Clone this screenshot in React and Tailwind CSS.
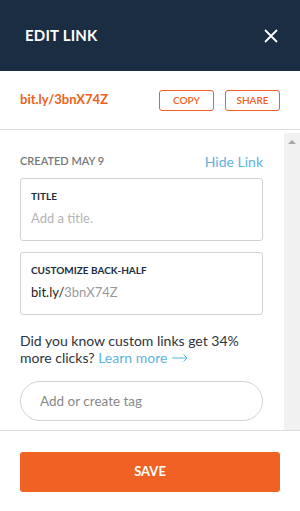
import React from "react";

export default function App() {
  return (
    <div className="w-[300px] h-[511px] bg-white flex flex-col overflow-hidden" style={{ fontFamily: "Lato, 'Open Sans', sans-serif" }}>
      {/* Header */}
      <div className="h-[71px] bg-[#1b2d42] flex items-center justify-between pl-[25px] pr-[21px] shrink-0">
        <h1 className="text-white font-bold text-[15px] tracking-[0.2px]">EDIT LINK</h1>
        <svg width="16" height="16" viewBox="0 0 16 16" className="text-white">
          <path d="M2 2 L14 14 M14 2 L2 14" stroke="currentColor" strokeWidth="1.8" />
        </svg>
      </div>

      {/* Link row */}
      <div className="h-[59px] flex items-center justify-between pl-[20px] pr-[20px] border-b border-[#dcdcdc] shrink-0">
        <span className="text-[#ee6123] font-bold text-[13px]">bit.ly/3bnX74Z</span>
        <div className="flex gap-[11px]">
          <button className="w-[55px] h-[21px] border border-[#ee6123] rounded-[3px] text-[#ee6123] text-[10px] font-semibold">COPY</button>
          <button className="w-[55px] h-[21px] border border-[#ee6123] rounded-[3px] text-[#ee6123] text-[10px] font-semibold">SHARE</button>
        </div>
      </div>

      {/* Scroll area */}
      <div className="flex h-[301px] border-b border-[#dcdcdc] shrink-0">
        <div className="flex-1 pl-[20px] pr-[21px] pt-[21px]">
          <div className="flex items-center justify-between">
            <span className="text-[#777] text-[11px] font-semibold">CREATED MAY 9</span>
            <span className="text-[#5eb2e0] text-[14px]">Hide Link</span>
          </div>
          <div className="mt-[6px] h-[63px] border border-[#d2d2d2] rounded-[3px] px-[10px] pt-[10px]">
            <div className="text-[#1b2d42] text-[10px] font-bold">TITLE</div>
            <div className="text-[#b5b5b5] text-[13px] mt-[5px]">Add a title.</div>
          </div>
          <div className="mt-[11px] h-[63px] border border-[#d2d2d2] rounded-[3px] px-[10px] pt-[10px]">
            <div className="text-[#1b2d42] text-[10px] font-bold">CUSTOMIZE BACK-HALF</div>
            <div className="text-[13px] mt-[5px] text-[#222]">
              bit.ly/<span className="text-[#999]">3bnX74Z</span>
            </div>
          </div>
          <p className="mt-[17px] w-[225px] text-[14px] leading-[17px] text-[#2b3440]">
            Did you know custom links get 34% more clicks?{" "}
            <span className="text-[#5eb2e0] inline-flex items-center gap-[5px]">
              Learn more
              <svg width="16" height="8" viewBox="0 0 16 8">
                <path d="M0 4 H15 M11.5 0.5 L15 4 L11.5 7.5" stroke="currentColor" strokeWidth="1" fill="none" />
              </svg>
            </span>
          </p>
          <div className="mt-[15px] h-[40px] border border-[#d2d2d2] rounded-full flex items-center pl-[19px] text-[13.5px] text-[#888]">
            Add or create tag
          </div>
        </div>
        <div className="w-[16px] bg-[#f1f1f1] mt-[3px] flex justify-center pt-[6px]">
          <svg width="8" height="6" viewBox="0 0 8 6">
            <path d="M0 5 L4 1 L8 5 Z" fill="#a8a8a8" />
          </svg>
        </div>
      </div>

      {/* Footer */}
      <div className="flex-1 px-[20px] pt-[21px]">
        <button className="w-full h-[40px] bg-[#ef6224] rounded-[3px] text-white font-bold text-[13px]">SAVE</button>
      </div>
    </div>
  );
}
